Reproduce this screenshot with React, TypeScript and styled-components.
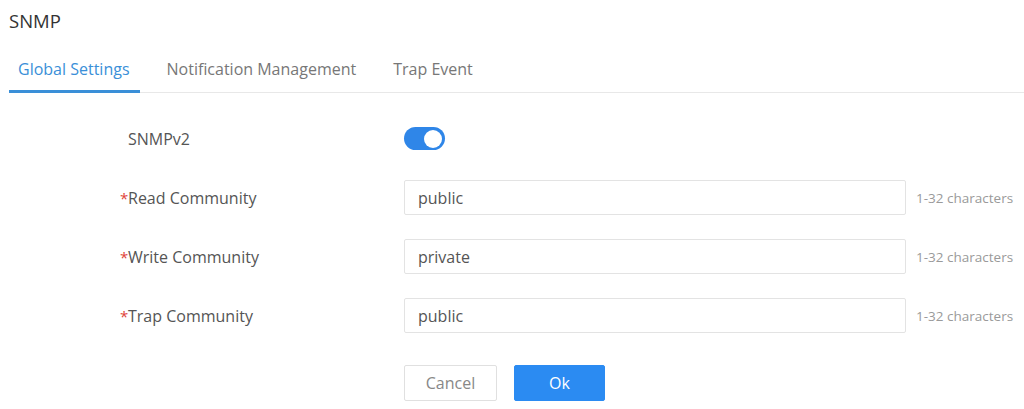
import React from "react";
import styled, { createGlobalStyle } from "styled-components";

const Global = createGlobalStyle`
  html, body { margin: 0; padding: 0; background: #fff; }
  body { font-family: "Open Sans", "Liberation Sans", sans-serif; }
  * { box-sizing: border-box; }
`;

const Page = styled.div`
  width: 1024px;
  height: 409px;
  padding-left: 9px;
  overflow: hidden;
`;

const Title = styled.h1`
  margin: 0;
  height: 40px;
  display: flex;
  align-items: center;
  font-size: 18.5px;
  font-weight: 500;
  color: #333;
`;

const TabBar = styled.div`
  display: flex;
  gap: 18px;
  height: 53px;
  border-bottom: 1px solid #e8e8e8;
  align-items: stretch;
`;

const Tab = styled.div<{ $active?: boolean }>`
  display: flex;
  align-items: center;
  padding: 7px 10px 0 9px;
  font-size: 16px;
  color: ${(p) => (p.$active ? "#3a8fd8" : "#777")};
  border-bottom: 3px solid ${(p) => (p.$active ? "#3a8fd8" : "transparent")};
  margin-bottom: -1px;
`;

const Form = styled.div`
  display: grid;
  grid-template-columns: 284px 502px auto;
  row-gap: 24px;
  padding-left: 111px;
  padding-top: 28px;
`;

const Label = styled.div`
  display: flex;
  align-items: center;
  height: 35px;
  font-size: 16px;
  font-weight: 500;
  color: #555;
  padding-left: 8px;
  position: relative;
`;

const Star = styled.span`
  position: absolute;
  left: 0;
  color: #e0443a;
  font-size: 15px;
`;

const Control = styled.div`
  display: flex;
  align-items: center;
  height: 35px;
`;

const Switch = styled.div`
  width: 41px;
  height: 23px;
  border-radius: 12px;
  background: #2f86e8;
  position: relative;
`;

const Knob = styled.div`
  position: absolute;
  right: 3px;
  top: 2.5px;
  width: 18px;
  height: 18px;
  border-radius: 50%;
  background: #fff;
`;

const Input = styled.div`
  width: 502px;
  height: 35px;
  border: 1px solid #e3e3e3;
  border-radius: 2px;
  display: flex;
  align-items: center;
  padding-left: 13px;
  font-size: 16px;
  color: #555;
`;

const Hint = styled.div`
  display: flex;
  align-items: center;
  height: 35px;
  padding-left: 10px;
  font-size: 13.5px;
  color: #9a9a9a;
  white-space: nowrap;
`;

const Buttons = styled.div`
  display: flex;
  gap: 17px;
  padding-left: 395px;
  padding-top: 32px;
`;

const Button = styled.div<{ $primary?: boolean }>`
  width: ${(p) => (p.$primary ? "91px" : "93px")};
  height: 36px;
  display: flex;
  align-items: center;
  justify-content: center;
  border-radius: 2px;
  font-size: 16px;
  background: ${(p) => (p.$primary ? "#2b8bf2" : "#fff")};
  color: ${(p) => (p.$primary ? "#fff" : "#888")};
  border: 1px solid ${(p) => (p.$primary ? "#2b8bf2" : "#e0e0e0")};
`;

const fields = [
  { label: "Read Community", value: "public" },
  { label: "Write Community", value: "private" },
  { label: "Trap Community", value: "public" },
];

export default function App() {
  return (
    <Page>
      <Global />
      <Title>SNMP</Title>
      <TabBar>
        <Tab $active>Global Settings</Tab>
        <Tab>Notification Management</Tab>
        <Tab>Trap Event</Tab>
      </TabBar>
      <Form>
        <Label>SNMPv2</Label>
        <Control>
          <Switch>
            <Knob />
          </Switch>
        </Control>
        <div />
        {fields.map((f) => (
          <React.Fragment key={f.label}>
            <Label>
              <Star>*</Star>
              {f.label}
            </Label>
            <Control>
              <Input>{f.value}</Input>
            </Control>
            <Hint>1-32 characters</Hint>
          </React.Fragment>
        ))}
      </Form>
      <Buttons>
        <Button>Cancel</Button>
        <Button $primary>Ok</Button>
      </Buttons>
    </Page>
  );
}
